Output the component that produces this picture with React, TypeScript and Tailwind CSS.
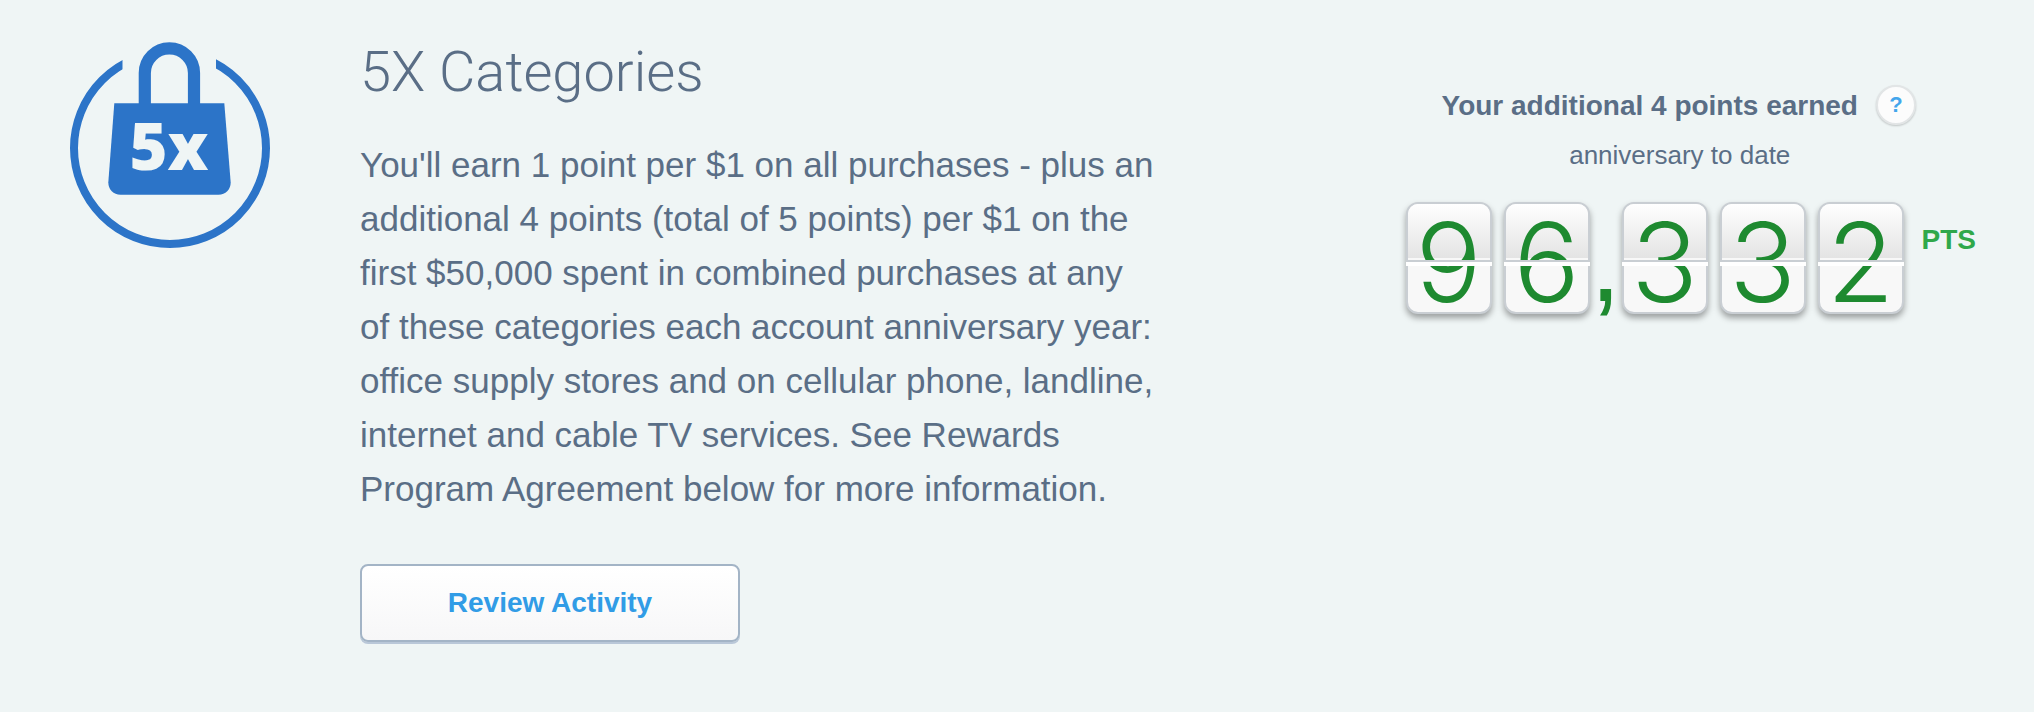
import React from 'react';

const digits = ['9', '6', ',', '3', '3', '2'];

function BagIcon() {
  return (
    <svg className="w-[200px] h-[206px] shrink-0" viewBox="0 0 200 206" role="img" aria-label="5x">
      <clipPath id="ring">
        <path d="M0 0H52.5V60H146V0H200V206H0Z" />
      </clipPath>
      <circle cx="100" cy="106" r="96" fill="none" stroke="#2c74c8" strokeWidth="8" clipPath="url(#ring)" />
      <path d="M74.8 64V31a24.6 24.6 0 0 1 49.2 0v33" fill="none" stroke="#2c74c8" strokeWidth="12.2" />
      <path
        d="M44.3 61.3H154.3L160.7 140.5C160.7 147.5 155.5 152.7 148.5 152.7H50.5C43.5 152.7 38.3 147.5 38.3 140.5Z"
        fill="#2c74c8"
      />
      <text x="99" y="128" textAnchor="middle" fontSize="65" fontWeight="800" fill="#eff5f5" className="font-['Open_Sans',sans-serif]">
        5x
      </text>
    </svg>
  );
}

function Digit({ value }: { value: string }) {
  return (
    <div className="relative w-[86px] h-[112px] rounded-xl border-2 border-[#c9ced3] bg-[#f8f8f8] shadow-[0_4px_6px_rgba(0,0,0,0.35)]">
      <div className="h-[54px] rounded-t-[10px] bg-linear-to-b from-white to-[#e4e4e4]" />
      <span className="absolute inset-0 text-center text-[110px] leading-[116px] font-light font-['Inter',sans-serif] text-[#1e8a30]">
        {value}
      </span>
      <div className="absolute -inset-x-0.5 top-[56px] h-[6px] border-t-2 border-[#c9ced3] bg-white" />
    </div>
  );
}

function PointsCounter() {
  return (
    <div className="flex">
      <div className="flex gap-3" role="img" aria-label="96,332 points">
        {digits.map((d, i) =>
          d === ',' ? (
            <span key={i} className="w-2 h-[112px] flex justify-center text-[112px] leading-[122px] text-[#1e8a30]">
              ,
            </span>
          ) : (
            <Digit key={i} value={d} />
          )
        )}
      </div>
      <span className="ml-[18px] mt-5 text-[28px] leading-9 font-bold text-[#2fa84a]">PTS</span>
    </div>
  );
}

export default function App() {
  return (
    <section className="flex min-h-screen items-start bg-[#eff5f5] pt-[42px] pl-[70px] pr-[58px] pb-[68px] font-['Liberation_Sans',Arial,sans-serif] text-[#5a6e86]">
      <BagIcon />

      <div className="ml-[90px] w-[800px]">
        <h2 className="text-[56px] leading-[60px] font-light font-['Roboto',sans-serif]">5X Categories</h2>
        <p className="mt-9 text-[35px] leading-[54px]">
          You'll earn 1 point per $1 on all purchases - plus an additional 4 points (total of 5 points) per $1 on the
          first $50,000 spent in combined purchases at any of these categories each account anniversary year: office
          supply stores and on cellular phone, landline, internet and cable TV services. See Rewards Program Agreement
          below for more information.
        </p>
        <button
          type="button"
          className="mt-12 h-[78px] w-[380px] rounded-lg border-2 border-[#a3b4c6] bg-linear-to-b from-white to-[#f7f7f8] shadow-[0_2px_0_#b9c7d8] text-[28px] font-bold text-[#319ce6]"
        >
          Review Activity
        </button>
      </div>

      <div className="ml-auto mt-[42px]">
        <div className="flex items-center justify-center gap-[18px] -ml-6">
          <h3 className="pt-0.5 text-[28px] leading-10 font-bold">Your additional 4 points earned</h3>
          <button
            type="button"
            aria-label="Help"
            className="size-10 rounded-full border-2 border-[#e2e5e6] bg-[#fcfcfc] shadow-[0_1px_2px_rgba(0,0,0,0.2)] text-[22px] leading-9 font-bold text-[#43a6ec]"
          >
            ?
          </button>
        </div>
        <p className="mt-2.5 mb-7 -ml-[22px] text-center text-[26px] leading-[38px]">anniversary to date</p>
        <PointsCounter />
      </div>
    </section>
  );
}
